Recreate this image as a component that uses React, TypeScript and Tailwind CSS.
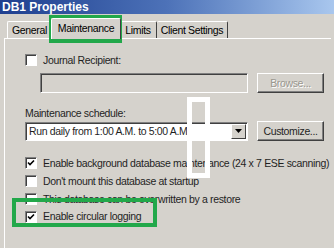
import React from 'react';

const Check = ({ checked = false }: { checked?: boolean }) => (
  <span className="w-[12px] h-[12px] shrink-0 bg-white border-t border-l border-t-[#808080] border-l-[#808080] border-b border-r border-b-white border-r-white shadow-[inset_1px_1px_0_#404040] flex items-center justify-center">
    {checked && (
      <svg width="8" height="8" viewBox="0 0 8 8">
        <path d="M1 3.5 L3 5.5 L7 1.5" stroke="#000" strokeWidth="1.6" fill="none" />
      </svg>
    )}
  </span>
);

const CheckRow = ({ label, checked }: { label: string; checked?: boolean }) => (
  <div className="flex items-center gap-[6px] h-[18px] whitespace-nowrap">
    <Check checked={checked} />
    <span className="text-[#1f1f1f]">{label}</span>
  </div>
);

const Button = ({ label, disabled }: { label: string; disabled?: boolean }) => (
  <div className="w-[67px] h-[20px] bg-[#d5d2cc] border border-t-white border-l-white border-b-[#404040] border-r-[#404040] shadow-[inset_-1px_-1px_0_#808080] flex items-center justify-center">
    <span className={disabled ? 'text-[#9a978f] [text-shadow:1px_1px_0_#fff]' : 'text-[#1f1f1f]'}>{label}</span>
  </div>
);

export default function App() {
  return (
    <div
      className="relative w-[334px] h-[248px] overflow-hidden bg-[#d5d2cc] text-[10.5px] tracking-[-0.35px] leading-none whitespace-nowrap"
      style={{ fontFamily: '"Liberation Sans", Arial, sans-serif' }}
    >
      {/* title bar */}
      <div className="h-[14px] bg-gradient-to-r from-[#1f3f8f] via-[#4d72b8] to-[#a9c7ee] flex items-center pl-[2px]">
        <span className="text-white font-bold text-[12px] tracking-normal">DB1 Properties</span>
      </div>

      {/* tabs */}
      <div className="flex items-end h-[24px] pl-[7px] pt-[4px]">
        <div className="w-[45px] h-[17px] border-t border-l border-white border-r border-r-[#808080] rounded-t-[2px] flex items-center justify-center">
          General
        </div>
        <div className="relative z-10 w-[70px] h-[21px] -mb-[1px] -mx-[1px] bg-[#d5d2cc] border-t border-l border-white border-r border-r-[#404040] rounded-t-[2px] flex items-start justify-center pt-[4px]">
          Maintenance
        </div>
        <div className="w-[37px] h-[17px] border-t border-white border-r border-r-[#404040] rounded-t-[2px] flex items-center justify-center">
          Limits
        </div>
        <div className="w-[71px] h-[17px] border-t border-white border-r border-r-[#404040] rounded-t-[2px] flex items-center justify-center">
          Client Settings
        </div>
      </div>

      {/* panel */}
      <div className="ml-[4px] mr-[3px] h-[220px] border-t border-l border-white pl-[20px] pt-[12px] text-[#1f1f1f]">
        <CheckRow label="Journal Recipient:" />
        <div className="flex items-center gap-[9px] mt-[4px] ml-[15px]">
          <div className="w-[208px] h-[20px] bg-[#d5d2cc] border border-t-[#808080] border-l-[#808080] border-b-white border-r-white shadow-[inset_1px_1px_0_#404040]" />
          <Button label="Browse..." disabled />
        </div>

        <div className="mt-[14px] h-[12px] flex items-center">Maintenance schedule:</div>
        <div className="flex items-center gap-[9px] mt-[2px]">
          <div className="w-[223px] h-[19px] bg-white border border-t-[#808080] border-l-[#808080] border-b-white border-r-white shadow-[inset_1px_1px_0_#404040] flex items-center pl-[3px] pr-[1px]">
            <span className="flex-1">Run daily from 1:00 A.M. to 5:00 A.M.</span>
            <div className="w-[15px] h-[15px] bg-[#d5d2cc] border border-t-white border-l-white border-b-[#404040] border-r-[#404040] flex items-center justify-center">
              <svg width="7" height="4" viewBox="0 0 7 4">
                <path d="M0 0 H7 L3.5 4 Z" fill="#000" />
              </svg>
            </div>
          </div>
          <Button label="Customize..." />
        </div>

        <div className="mt-[13px] flex flex-col">
          <CheckRow label="Enable background database maintenance (24 x 7 ESE scanning)" checked />
          <CheckRow label="Don't mount this database at startup" />
          <CheckRow label="This database can be overwritten by a restore" />
          <div className="h-[17px] flex items-center">
            <CheckRow label="Enable circular logging" checked />
          </div>
        </div>
      </div>

      {/* annotations */}
      <div className="absolute left-[49px] top-[15px] w-[73px] h-[28px] border-[4px] border-[#22a84a]" />
      <div className="absolute left-[12px] top-[198px] w-[145px] h-[29px] border-[4px] border-[#22a84a]" />
      <div className="absolute left-[187px] top-[97px] w-[23px] h-[81px] border-[5px] border-white" />
    </div>
  );
}
